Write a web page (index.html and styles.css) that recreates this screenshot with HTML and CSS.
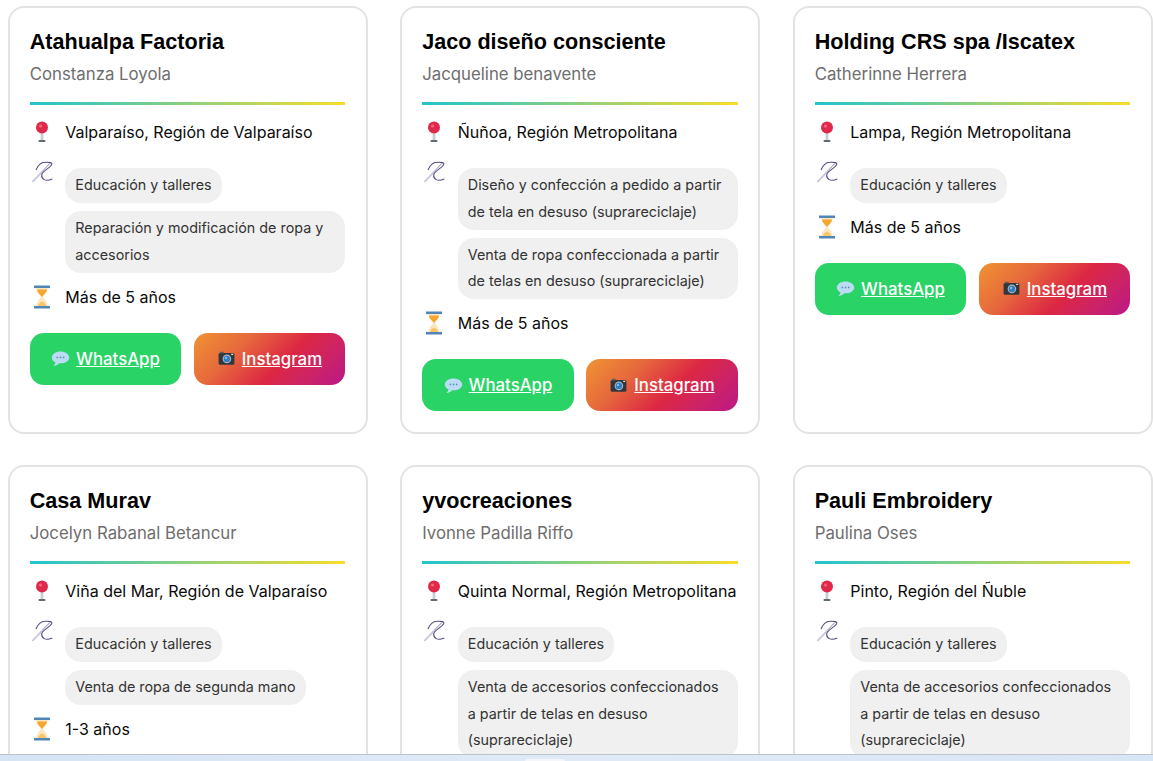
FILE: index.html
```html
<html>
<head>
    <meta charset="UTF-8">
    <title>Emprendimientos</title>
    <link rel="stylesheet" href="styles.css">
</head>
<body>
    <svg class="defs" width="0" height="0">
        <symbol id="pin" viewBox="0 0 24 24">
            <rect x="10.6" y="10" width="2.8" height="10" fill="#c9ccd0"/>
            <rect x="8.5" y="20" width="7" height="2" rx="1" fill="#5f6b73"/>
            <circle cx="12" cy="7.5" r="6" fill="#e0294a"/>
            <circle cx="10.5" cy="6" r="1.6" fill="#f26a80"/>
        </symbol>
        <symbol id="needle" viewBox="0 0 24 24">
            <path d="M1.6 21.4 L12 10.4 L13.6 11.8 L3 22.4 Z" fill="#c5c9dc"/>
            <path d="M12.6 11 L20 3.3" fill="none" stroke="#8a86ad" stroke-width="1"/>
            <path d="M6 10 C8 5 11 2.5 15 2.3 C19 2 23 2.5 21.5 5 C19 9 12 11 11.7 15 C11.5 19 15 22 22.3 19" fill="none" stroke="#54497f" stroke-width="1.1"/>
        </symbol>
        <symbol id="hourglass" viewBox="0 0 24 24">
            <rect x="4" y="0.5" width="16" height="2.6" fill="#4f86b5"/>
            <rect x="4" y="20.9" width="16" height="2.6" fill="#4f86b5"/>
            <path d="M6.5 3.1 H17.5 C17.5 8 13.5 10 13 12 C13.5 14 17.5 16 17.5 20.9 H6.5 C6.5 16 10.5 14 11 12 C10.5 10 6.5 8 6.5 3.1 Z" fill="#fde6bd"/>
            <path d="M7 4.5 H17 C16.6 8.5 13 10 12 12 C11 10 7.4 8.5 7 4.5 Z" fill="#f6a62e"/>
            <path d="M8 20.9 C8.5 18 11 17 12 16.5 C13 17 15.5 18 16 20.9 Z" fill="#f9c46b"/>
        </symbol>
        <symbol id="bubble" viewBox="0 0 24 24">
            <path d="M12 3 C6 3 1 6.4 1 10.6 C1 13.2 2.8 15.4 5.6 16.8 C5.6 18.4 4.6 20 3.2 21.4 C6.4 21.2 9 19.8 10.4 18 C10.9 18.1 11.5 18.1 12 18.1 C18 18.1 23 14.8 23 10.6 C23 6.4 18 3 12 3 Z" fill="#bcdcf5"/>
            <circle cx="8" cy="10.6" r="1.1" fill="#5f8fb5"/>
            <circle cx="12" cy="10.6" r="1.1" fill="#5f8fb5"/>
            <circle cx="16" cy="10.6" r="1.1" fill="#5f8fb5"/>
        </symbol>
        <symbol id="camera" viewBox="0 0 24 24">
            <rect x="2" y="5" width="20" height="15" rx="2" fill="#33373d"/>
            <rect x="3.5" y="3.5" width="5" height="2" fill="#5b6068"/>
            <rect x="18" y="6" width="2.4" height="1.6" fill="#e8e8e8"/>
            <circle cx="12.5" cy="12.5" r="5.4" fill="#aab4bd"/>
            <circle cx="12.5" cy="12.5" r="4" fill="#2f7fc4"/>
            <circle cx="11.4" cy="11.4" r="1.2" fill="#a7d3f2"/>
        </symbol>
    </svg>

    <div class="grilla">
        <div class="tarjeta">
            <h2 class="nombre">Atahualpa Factoria</h2>
            <p class="persona">Constanza Loyola</p>
            <div class="linea"></div>
            <div class="fila">
                <svg class="icono"><use href="#pin"/></svg>
                <span>Valparaíso, Región de Valparaíso</span>
            </div>
            <div class="fila filaServicios">
                <svg class="icono iconoAguja"><use href="#needle"/></svg>
                <div class="servicios">
                    <span class="chip">Educación y talleres</span>
                    <span class="chip">Reparación y modificación de ropa y accesorios</span>
                </div>
            </div>
            <div class="fila">
                <svg class="icono"><use href="#hourglass"/></svg>
                <span>Más de 5 años</span>
            </div>
            <div class="botones">
                <a class="boton whatsapp" href="#"><svg class="iconoBoton"><use href="#bubble"/></svg><span>WhatsApp</span></a>
                <a class="boton instagram" href="#"><svg class="iconoBoton"><use href="#camera"/></svg><span>Instagram</span></a>
            </div>
        </div>

        <div class="tarjeta">
            <h2 class="nombre">Jaco diseño consciente</h2>
            <p class="persona">Jacqueline benavente</p>
            <div class="linea"></div>
            <div class="fila">
                <svg class="icono"><use href="#pin"/></svg>
                <span>Ñuñoa, Región Metropolitana</span>
            </div>
            <div class="fila filaServicios">
                <svg class="icono iconoAguja"><use href="#needle"/></svg>
                <div class="servicios">
                    <span class="chip">Diseño y confección a pedido a partir de tela en desuso (suprareciclaje)</span>
                    <span class="chip">Venta de ropa confeccionada a partir de telas en desuso (suprareciclaje)</span>
                </div>
            </div>
            <div class="fila">
                <svg class="icono"><use href="#hourglass"/></svg>
                <span>Más de 5 años</span>
            </div>
            <div class="botones">
                <a class="boton whatsapp" href="#"><svg class="iconoBoton"><use href="#bubble"/></svg><span>WhatsApp</span></a>
                <a class="boton instagram" href="#"><svg class="iconoBoton"><use href="#camera"/></svg><span>Instagram</span></a>
            </div>
        </div>

        <div class="tarjeta">
            <h2 class="nombre">Holding CRS spa /Iscatex</h2>
            <p class="persona">Catherinne Herrera</p>
            <div class="linea"></div>
            <div class="fila">
                <svg class="icono"><use href="#pin"/></svg>
                <span>Lampa, Región Metropolitana</span>
            </div>
            <div class="fila filaServicios">
                <svg class="icono iconoAguja"><use href="#needle"/></svg>
                <div class="servicios">
                    <span class="chip">Educación y talleres</span>
                </div>
            </div>
            <div class="fila">
                <svg class="icono"><use href="#hourglass"/></svg>
                <span>Más de 5 años</span>
            </div>
            <div class="botones">
                <a class="boton whatsapp" href="#"><svg class="iconoBoton"><use href="#bubble"/></svg><span>WhatsApp</span></a>
                <a class="boton instagram" href="#"><svg class="iconoBoton"><use href="#camera"/></svg><span>Instagram</span></a>
            </div>
        </div>

        <div class="tarjeta">
            <h2 class="nombre">Casa Murav</h2>
            <p class="persona">Jocelyn Rabanal Betancur</p>
            <div class="linea"></div>
            <div class="fila">
                <svg class="icono"><use href="#pin"/></svg>
                <span>Viña del Mar, Región de Valparaíso</span>
            </div>
            <div class="fila filaServicios">
                <svg class="icono iconoAguja"><use href="#needle"/></svg>
                <div class="servicios">
                    <span class="chip">Educación y talleres</span>
                    <span class="chip">Venta de ropa de segunda mano</span>
                </div>
            </div>
            <div class="fila">
                <svg class="icono"><use href="#hourglass"/></svg>
                <span>1-3 años</span>
            </div>
        </div>

        <div class="tarjeta">
            <h2 class="nombre">yvocreaciones</h2>
            <p class="persona">Ivonne Padilla Riffo</p>
            <div class="linea"></div>
            <div class="fila">
                <svg class="icono"><use href="#pin"/></svg>
                <span>Quinta Normal, Región Metropolitana</span>
            </div>
            <div class="fila filaServicios">
                <svg class="icono iconoAguja"><use href="#needle"/></svg>
                <div class="servicios">
                    <span class="chip">Educación y talleres</span>
                    <span class="chip">Venta de accesorios confeccionados a partir de telas en desuso (suprareciclaje)</span>
                </div>
            </div>
        </div>

        <div class="tarjeta">
            <h2 class="nombre">Pauli Embroidery</h2>
            <p class="persona">Paulina Oses</p>
            <div class="linea"></div>
            <div class="fila">
                <svg class="icono"><use href="#pin"/></svg>
                <span>Pinto, Región del Ñuble</span>
            </div>
            <div class="fila filaServicios">
                <svg class="icono iconoAguja"><use href="#needle"/></svg>
                <div class="servicios">
                    <span class="chip">Educación y talleres</span>
                    <span class="chip">Venta de accesorios confeccionados a partir de telas en desuso (suprareciclaje)</span>
                </div>
            </div>
        </div>
    </div>

    <div class="barraInferior"><div class="pestana"></div></div>
</body>
</html>
```

FILE: styles.css
```css
html, body {
    height: 100%;
    overflow: hidden;
}

body {
    margin: 0;
    background-color: white;
    font-family: "Inter", "Liberation Sans", sans-serif;
}

.defs {
    display: block;
}

.grilla {
    display: grid;
    grid-template-columns: repeat(3, 360px);
    grid-template-rows: 428px auto;
    column-gap: 32.5px;
    row-gap: 31px;
    padding: 6px 0 0 7.7px;
}

.tarjeta {
    box-sizing: border-box;
    border: 2px solid #e3e3e3;
    border-radius: 16px;
    padding: 19px 20.5px 19px 20px;
    background-color: white;
}

.nombre {
    margin: 0;
    font-family: "Liberation Sans", Arial, sans-serif;
    font-size: 21.6px;
    line-height: 29px;
    font-weight: bold;
    color: black;
}

.persona {
    margin: 6px 0 0 0;
    font-size: 16.8px;
    line-height: 24px;
    color: #6e6e6e;
}

.linea {
    height: 3px;
    margin: 16px 0 15px 0;
    background: linear-gradient(to right, #22c3cf, #f8dc2b);
}

.fila {
    display: flex;
    align-items: center;
    gap: 11.6px;
    min-height: 24px;
    margin-bottom: 12px;
    font-size: 16px;
    line-height: 24px;
    color: #0a0a0a;
}

.filaServicios {
    align-items: flex-start;
    margin-top: 24px;
    margin-bottom: 12px;
}

.icono {
    flex: none;
    width: 24px;
    height: 24px;
}

.iconoAguja {
    margin-top: -8px;
}

.servicios {
    display: flex;
    flex-direction: column;
    align-items: flex-start;
    gap: 8px;
}

.chip {
    padding: 4.2px 10px;
    border-radius: 16px;
    background-color: #f0f0f0;
    font-size: 14.35px;
    line-height: 26.6px;
    color: #333;
}

.botones {
    display: flex;
    gap: 12.4px;
    margin-top: 24px;
}

.boton {
    flex: 1;
    display: flex;
    align-items: center;
    justify-content: center;
    gap: 6px;
    height: 52px;
    border-radius: 14px;
    color: white;
    font-size: 16.8px;
    font-weight: 500;
}

.iconoBoton {
    flex: none;
    width: 19px;
    height: 19px;
}

.whatsapp {
    background-color: #29d366;
}

.instagram {
    background: linear-gradient(135deg, #f09433, #e6683c 30%, #dc2743 58%, #cc2366 78%, #bc1888);
}

.barraInferior {
    position: fixed;
    left: 0;
    right: 0;
    bottom: 0;
    height: 6px;
    border-top: 1px solid #bcc4cf;
    background: linear-gradient(to right, #d6e4f4, #e0eaf7 50%, #d8e5f4);
}

.pestana {
    position: absolute;
    left: 525px;
    bottom: 0;
    width: 40px;
    height: 2px;
    border-radius: 6px 6px 0 0;
    background-color: #f4f6fa;
}
```
